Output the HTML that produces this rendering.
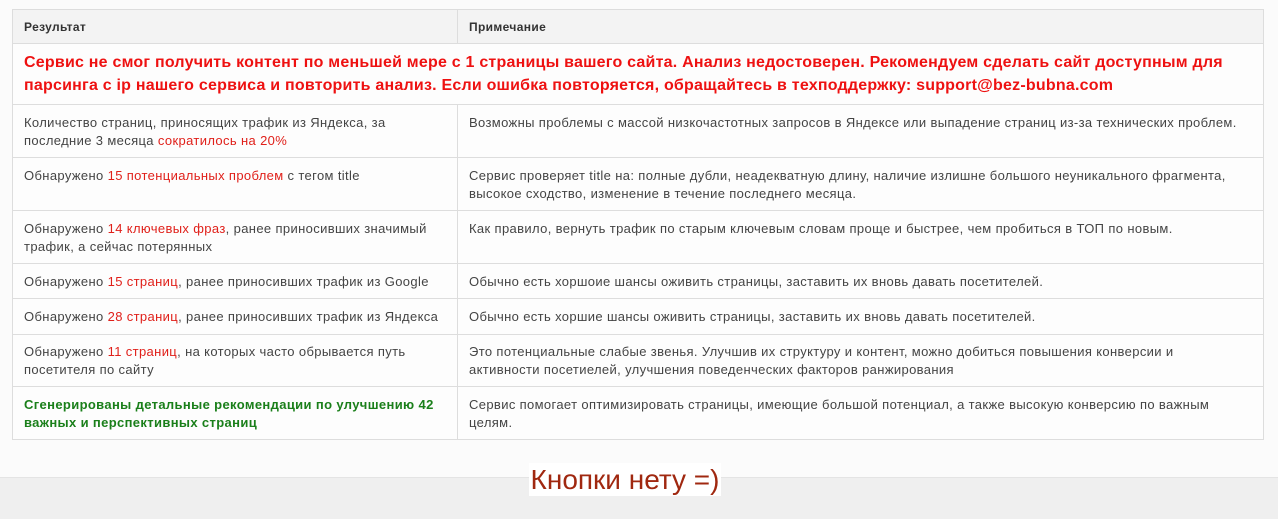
<!DOCTYPE html><html><head><meta charset="utf-8"><style>
body{margin:0;width:1278px;height:518px;background:#fbfbfb;font-family:"Liberation Sans",sans-serif;position:relative;overflow:hidden}
.bot{position:absolute;left:0;top:477px;width:1278px;height:41px;background:#efefef;border-top:1px solid #e4e4e4}
table{position:absolute;left:12px;top:9px;width:1252px;border-collapse:collapse;font-size:13px;color:#444;letter-spacing:0.36px}
td,th{border:1px solid #ddd;padding:0 11px;text-align:left;vertical-align:top;line-height:18px}
th{height:33px;vertical-align:middle;font-size:12px;color:#333;background:#f3f3f3}
td{background:#fdfdfd}
.r{color:#e0201a}
.g{color:#1a7f1a;font-weight:bold}
.err{color:#ee1111;font-weight:bold;font-size:16px;line-height:23px;padding-top:7px;height:53px;letter-spacing:0.22px}
.btn{position:absolute;left:529px;top:463px;width:192px;height:33px;background:#fff;color:#a02810;font-size:28px;line-height:33px;text-align:center;white-space:nowrap}
</style></head><body>
<div class="bot"></div>
<table>
<tr><th style="width:422px">Результат</th><th>Примечание</th></tr>
<tr><td colspan="2" class="err">Сервис не смог получить контент по меньшей мере с 1 страницы вашего сайта. Анализ недостоверен. Рекомендуем сделать сайт доступным для парсинга с ip нашего сервиса и повторить анализ. Если ошибка повторяется, обращайтесь в техподдержку: support@bez-bubna.com</td></tr>
<tr style="height:53px"><td style="padding-top:9px">Количество страниц, приносящих трафик из Яндекса, за последние 3 месяца <span class="r">сократилось на 20%</span></td><td style="padding-top:9px">Возможны проблемы с массой низкочастотных запросов в Яндексе или выпадение страниц из-за технических проблем.</td></tr>
<tr style="height:53px"><td style="padding-top:9px">Обнаружено <span class="r">15 потенциальных проблем</span> с тегом title</td><td style="padding-top:9px">Сервис проверяет title на: полные дубли, неадекватную длину, наличие излишне большого неуникального фрагмента, высокое сходство, изменение в течение последнего месяца.</td></tr>
<tr style="height:53px"><td style="padding-top:9px">Обнаружено <span class="r">14 ключевых фраз</span>, ранее приносивших значимый трафик, а сейчас потерянных</td><td style="padding-top:9px">Как правило, вернуть трафик по старым ключевым словам проще и быстрее, чем пробиться в ТОП по новым.</td></tr>
<tr style="height:35px"><td style="padding-top:9px">Обнаружено <span class="r">15 страниц</span>, ранее приносивших трафик из Google</td><td style="padding-top:9px">Обычно есть хоршоие шансы оживить страницы, заставить их вновь давать посетителей.</td></tr>
<tr style="height:36px"><td style="padding-top:9px">Обнаружено <span class="r">28 страниц</span>, ранее приносивших трафик из Яндекса</td><td style="padding-top:9px">Обычно есть хоршие шансы оживить страницы, заставить их вновь давать посетителей.</td></tr>
<tr style="height:52px"><td style="padding-top:8px">Обнаружено <span class="r">11 страниц</span>, на которых часто обрывается путь посетителя по сайту</td><td style="padding-top:8px">Это потенциальные слабые звенья. Улучшив их структуру и контент, можно добиться повышения конверсии и<br>активности посетиелей, улучшения поведенческих факторов ранжирования</td></tr>
<tr style="height:53px"><td style="padding-top:9px" class="g">Сгенерированы детальные рекомендации по улучшению 42 важных и перспективных страниц</td><td style="padding-top:9px">Сервис помогает оптимизировать страницы, имеющие большой потенциал, а также высокую конверсию по важным целям.</td></tr>
</table>
<div class="btn">Кнопки нету =)</div>
</body></html>
